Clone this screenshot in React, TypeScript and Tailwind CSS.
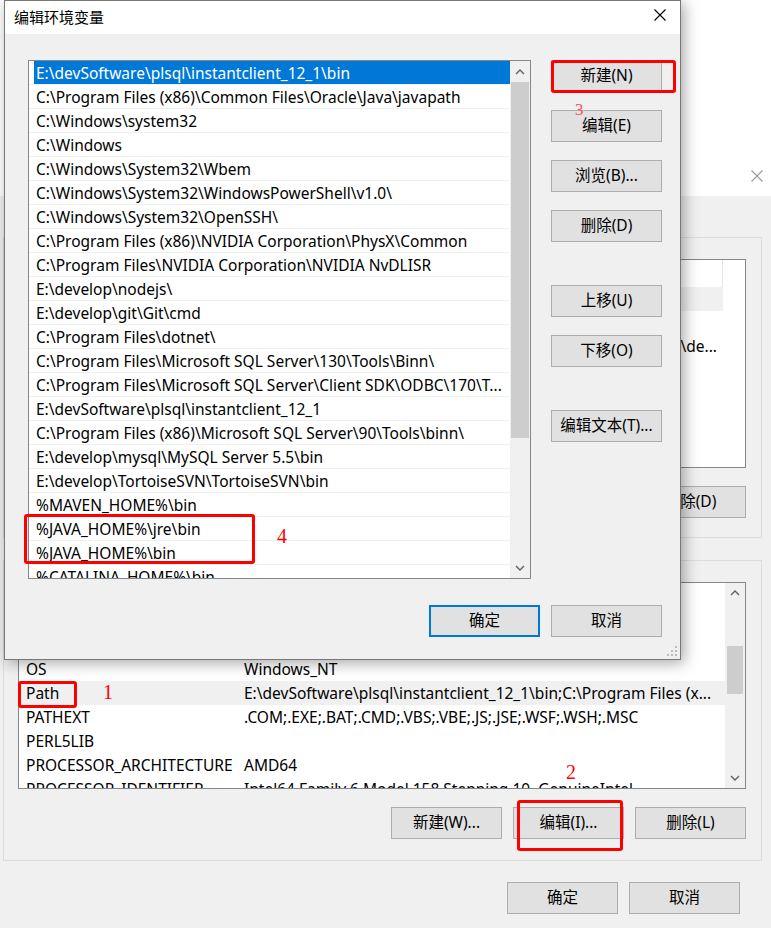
import React from "react";

const PATHS = [
  "E:\\devSoftware\\plsql\\instantclient_12_1\\bin",
  "C:\\Program Files (x86)\\Common Files\\Oracle\\Java\\javapath",
  "C:\\Windows\\system32",
  "C:\\Windows",
  "C:\\Windows\\System32\\Wbem",
  "C:\\Windows\\System32\\WindowsPowerShell\\v1.0\\",
  "C:\\Windows\\System32\\OpenSSH\\",
  "C:\\Program Files (x86)\\NVIDIA Corporation\\PhysX\\Common",
  "C:\\Program Files\\NVIDIA Corporation\\NVIDIA NvDLISR",
  "E:\\develop\\nodejs\\",
  "E:\\develop\\git\\Git\\cmd",
  "C:\\Program Files\\dotnet\\",
  "C:\\Program Files\\Microsoft SQL Server\\130\\Tools\\Binn\\",
  "C:\\Program Files\\Microsoft SQL Server\\Client SDK\\ODBC\\170\\T...",
  "E:\\devSoftware\\plsql\\instantclient_12_1",
  "C:\\Program Files (x86)\\Microsoft SQL Server\\90\\Tools\\binn\\",
  "E:\\develop\\mysql\\MySQL Server 5.5\\bin",
  "E:\\develop\\TortoiseSVN\\TortoiseSVN\\bin",
  "%MAVEN_HOME%\\bin",
  "%JAVA_HOME%\\jre\\bin",
  "%JAVA_HOME%\\bin",
  "%CATALINA_HOME%\\bin",
];

// rows above "OS" sit behind the edit dialog, so only the visible ones are listed
const SYS_VARS = [
  { name: "OS", value: "Windows_NT" },
  { name: "Path", value: "E:\\devSoftware\\plsql\\instantclient_12_1\\bin;C:\\Program Files (x...", active: true },
  { name: "PATHEXT", value: ".COM;.EXE;.BAT;.CMD;.VBS;.VBE;.JS;.JSE;.WSF;.WSH;.MSC" },
  { name: "PERL5LIB", value: "" },
  { name: "PROCESSOR_ARCHITECTURE", value: "AMD64" },
  { name: "PROCESSOR_IDENTIFIER", value: "Intel64 Family 6 Model 158 Stepping 10, GenuineIntel" },
];

function CloseX({ color }: { color: string }) {
  return (
    <svg width="12" height="12" viewBox="0 0 12 12">
      <path d="M0.5 0.5 L11.5 11.5 M11.5 0.5 L0.5 11.5" stroke={color} strokeWidth="1.1" fill="none" />
    </svg>
  );
}

function Chevron({ down }: { down?: boolean }) {
  return (
    <svg width="10" height="6" viewBox="0 0 10 6">
      <path d={down ? "M1 1 L5 5 L9 1" : "M1 5 L5 1 L9 5"} stroke="#606060" strokeWidth="1.4" fill="none" />
    </svg>
  );
}

function Btn({ children, primary, className = "" }: { children: React.ReactNode; primary?: boolean; className?: string }) {
  return (
    <div
      className={`flex h-[32px] w-[111px] shrink-0 items-center justify-center bg-[#e1e1e1] text-[15.5px] text-black ${
        primary ? "border-2 border-[#0078d7]" : "border border-[#adadad]"
      } ${className}`}
    >
      {children}
    </div>
  );
}

function RedBox({ className }: { className: string }) {
  return <div className={`absolute rounded-[3px] border-[3px] border-[#ff0000] ${className}`} />;
}

function Mark({ children, className }: { children: React.ReactNode; className: string }) {
  return (
    <div className={`absolute font-['Liberation_Serif',serif] leading-none text-[#ff0000] ${className}`}>{children}</div>
  );
}

function BackWindow() {
  return (
    <div className="absolute inset-x-0 top-[158px] bottom-0 flex flex-col bg-[#f0f0f0]">
      {/* title bar */}
      <div className="relative h-[38px] shrink-0 bg-white">
        <div className="absolute right-[8px] top-[12px]">
          <CloseX color="#9a9a9a" />
        </div>
      </div>

      <div className="flex flex-col pl-[3px] pr-[9px] pt-[41px]">
        {/* user variables */}
        <div className="flex h-[301px] flex-col border border-[#dcdcdc] pl-[14px] pr-[15px] pt-[21px]">
          <div className="flex h-[209px] flex-col border border-[#828790] bg-white pr-[22px] text-[15.5px]">
            <div className="flex h-[27px] shrink-0 justify-end border-r border-[#e5e5e5]" />
            <div className="h-[24px] shrink-0 bg-[#f0f0f0]" />
            <div className="h-[24px] shrink-0" />
            <div className="flex h-[24px] shrink-0 items-center justify-end pr-[6px]">E:\de...</div>
          </div>
          <div className="mt-[18px] flex justify-end gap-[11px]">
            <Btn>新建(N)...</Btn>
            <Btn>编辑(E)...</Btn>
            <Btn>删除(D)</Btn>
          </div>
        </div>

        {/* system variables */}
        <div className="mt-[22px] flex h-[301px] flex-col border border-[#dcdcdc] pl-[14px] pr-[15px] pt-[21px]">
          <div className="flex h-[207px] border border-[#828790] bg-white text-[15.5px]">
            <div className="flex flex-1 flex-col overflow-hidden">
              <div className="h-[74px] shrink-0" />
              {SYS_VARS.map((v) => (
                <div
                  key={v.name}
                  className={`flex h-[24px] shrink-0 items-center whitespace-nowrap pt-[2px] ${v.active ? "bg-[#f0f0f0]" : ""}`}
                >
                  <div className="w-[225px] shrink-0 pl-[7px]">{v.name}</div>
                  <div>{v.value}</div>
                </div>
              ))}
            </div>
            <div className="flex w-[20px] shrink-0 flex-col bg-[#f0f0f0]">
              <div className="flex h-[20px] items-center justify-center">
                <Chevron />
              </div>
              <div className="mx-[2px] mt-[43px] h-[48px] bg-[#cdcdcd]" />
              <div className="flex-1" />
              <div className="flex h-[20px] items-center justify-center">
                <Chevron down />
              </div>
            </div>
          </div>
          <div className="mt-[18px] flex justify-end gap-[11px]">
            <Btn>新建(W)...</Btn>
            <Btn>编辑(I)...</Btn>
            <Btn>删除(L)</Btn>
          </div>
        </div>

        <div className="mt-[21px] flex justify-end gap-[11px] pr-[22px]">
          <Btn>确定</Btn>
          <Btn>取消</Btn>
        </div>
      </div>
    </div>
  );
}

function EditWindow() {
  return (
    <div className="absolute left-[4px] top-0 flex h-[660px] w-[677px] flex-col border border-[#777] bg-[#f0f0f0] shadow-[3px_3px_14px_rgba(0,0,0,0.35)]">
      <div className="relative flex h-[33px] shrink-0 items-center bg-white pl-[9px] text-[15px] text-black">
        编辑环境变量
        <div className="absolute right-[14px] top-[8px]">
          <CloseX color="#000" />
        </div>
      </div>

      <div className="relative flex flex-col pl-[23px] pr-[18px] pt-[26px]">
        <div className="flex">
          {/* path list */}
          <div className="flex h-[519px] w-[503px] border border-[#828790] bg-white text-[15.5px] text-black">
            <div className="flex flex-1 flex-col overflow-hidden">
              {PATHS.map((p, i) => (
                <div key={i} className="h-[24px] shrink-0 border-b border-[#f0f0f0]">
                  <div
                    className={`ml-[5px] flex h-[23px] items-center whitespace-nowrap pl-[2px] pt-[2px] ${
                      i === 0 ? "bg-[#0078d7] text-white" : ""
                    }`}
                  >
                    {p}
                  </div>
                </div>
              ))}
            </div>
            <div className="flex w-[20px] shrink-0 flex-col bg-[#f0f0f0]">
              <div className="flex h-[21px] items-center justify-center">
                <Chevron />
              </div>
              <div className="mx-[1px] h-[356px] bg-[#cdcdcd]" />
              <div className="flex-1" />
              <div className="flex h-[21px] items-center justify-center">
                <Chevron down />
              </div>
            </div>
          </div>

          {/* buttons */}
          <div className="ml-[20px] flex flex-col">
            <Btn>新建(N)</Btn>
            <Btn className="mt-[18px]">编辑(E)</Btn>
            <Btn className="mt-[18px]">浏览(B)...</Btn>
            <Btn className="mt-[18px]">删除(D)</Btn>
            <Btn className="mt-[43px]">上移(U)</Btn>
            <Btn className="mt-[18px]">下移(O)</Btn>
            <Btn className="mt-[43px]">编辑文本(T)...</Btn>
          </div>
        </div>

        <div className="mt-[26px] flex justify-end gap-[11px] pb-[22px]">
          <Btn primary>确定</Btn>
          <Btn>取消</Btn>
        </div>

        <svg className="absolute bottom-[2px] right-[2px]" width="12" height="12" viewBox="0 0 12 12">
          {[
            [9, 1],
            [9, 5],
            [5, 5],
            [9, 9],
            [5, 9],
            [1, 9],
          ].map(([x, y]) => (
            <rect key={`${x}-${y}`} x={x} y={y} width="2" height="2" fill="#bcbcbc" />
          ))}
        </svg>
      </div>
    </div>
  );
}

export default function App() {
  return (
    <div className="relative h-[928px] w-[771px] overflow-hidden bg-white font-['Noto_Sans','Noto_Sans_CJK_SC',sans-serif] text-black">
      <BackWindow />
      <EditWindow />

      {/* annotations */}
      <RedBox className="left-[551px] top-[60px] h-[33px] w-[125px]" />
      <Mark className="left-[575px] top-[101px] text-[17px] text-[#ff5050]">3</Mark>
      <RedBox className="left-[24px] top-[514px] h-[50px] w-[231px]" />
      <Mark className="left-[277px] top-[526px] text-[20px]">4</Mark>
      <RedBox className="left-[18px] top-[681px] h-[27px] w-[59px]" />
      <Mark className="left-[103px] top-[682px] text-[20px]">1</Mark>
      <RedBox className="left-[517px] top-[800px] h-[51px] w-[106px]" />
      <Mark className="left-[566px] top-[762px] text-[20px]">2</Mark>
    </div>
  );
}
